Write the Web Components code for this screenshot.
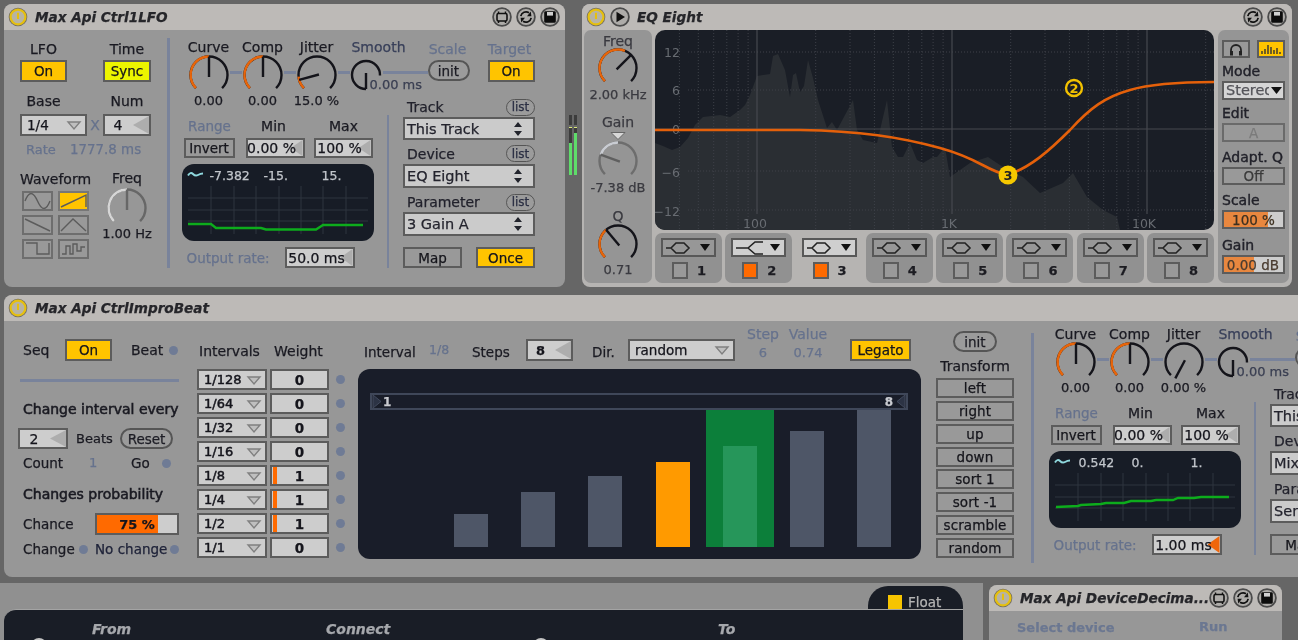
<!DOCTYPE html>
<html><head><meta charset="utf-8"><title>Max Api devices</title>
<style>
html,body{margin:0;padding:0;background:#fff;height:640px;overflow:hidden}
</style>
<script>
const BASE=`*{box-sizing:border-box}
.r{display:flex;align-items:center}.c{display:flex;flex-direction:column}
.l{display:block;white-space:nowrap;line-height:16px;height:16px}.m{text-align:center}
.b{color:#66728d}.s{font-size:14px;-webkit-text-stroke:.55px}.v{font-size:13px}
svg{display:block}`;
function def(name,render){customElements.define(name,class extends HTMLElement{
 connectedCallback(){if(this.shadowRoot)return;const a=n=>this.getAttribute(n);
  this.attachShadow({mode:'open'}).innerHTML='<style>'+BASE+'</style>'+render(a,this);}});}

/* ---------- small controls ---------- */
def('x-btn',()=>`<style>:host{display:flex;align-items:center;justify-content:center;border:2px solid #5c5c5c;background:#999;font-size:13.5px;white-space:nowrap;color:#16161c;height:21px}
:host([tone=on]){background:#ffc400}:host([tone=sync]){background:#ecf500}:host([tone=light]){background:#cbcbcb}:host([tone=dim]){color:#7b7b7b;border-color:#6a6a6a}:host([tone=soft]){color:#3a3a3a}
</style><slot></slot>`);
def('x-pill',()=>`<style>:host{display:flex;align-items:center;justify-content:center;border:2px solid #555;border-radius:11px;font-size:13.5px;color:#1d1d25;background:#9b9b9b;height:21px;white-space:nowrap}
:host([small]){border-width:1.5px;font-size:12px;height:17px;width:29px;color:#2c3044}</style><slot></slot>`);
def('x-led',()=>`<style>:host{display:block;width:9px;height:9px;border-radius:50%;background:#6f7b95;flex:none}</style>`);
def('x-num',(a)=>`<style>:host{display:block;position:relative;border:2px solid #5c5c5c;background:#cdcdcd;height:21px;font-size:14px;color:#15151c;overflow:hidden}
.t{position:absolute;left:0;right:var(--tr,14px);top:0;bottom:0;display:flex;align-items:center;justify-content:center;white-space:nowrap}
.a{position:absolute;right:0;top:0;bottom:0;width:var(--aw,14px);background:var(--ac,#adadad);clip-path:polygon(0 50%,100% 0,100% 100%)}</style>
<i class="a"></i><div class="t"><slot></slot></div>`);
def('x-drop',(a)=>`<style>:host{display:block;position:relative;border:2px solid #5c5c5c;background:#cdcdcd;height:21px;font-size:13.5px;color:#15151c;overflow:hidden}
.t{position:absolute;left:5px;top:0;bottom:0;display:flex;align-items:center;white-space:nowrap}
svg{position:absolute;right:3px;top:50%;margin-top:-6px}</style>
<div class="t"><slot></slot></div><svg width="16" height="12"><path d="M2 3H14L8 10Z" fill="#bfbfbf" stroke="#808080" stroke-width="1.4"/></svg>`);
def('x-spin',()=>`<style>:host{display:block;position:relative;border:2px solid #5c5c5c;background:#cbcbcb;font-size:14.5px;color:#24242e;overflow:hidden}
.t{position:absolute;left:2px;top:0;bottom:0;display:flex;align-items:center;white-space:nowrap}
svg{position:absolute;right:10px;top:50%;margin-top:-8px}</style>
<div class="t"><slot></slot></div><svg width="10" height="16"><path d="M5 1L9 6H1ZM5 15L1 10H9Z" fill="#22242c"/></svg>`);
def('x-slider',(a)=>`<style>:host{display:block;position:relative;border:2px solid #5c5c5c;background:#cdcdcd;height:22px;font-size:13.5px;color:#15151c;overflow:hidden}
.f{position:absolute;left:0;top:0;bottom:0;width:${a('pct')||0}%;background:${a('col')||'#ff6a00'}}
.t{position:absolute;inset:0;display:flex;align-items:center;justify-content:${a('just')||'center'};padding:0 ${a('pad')||0}px;white-space:nowrap}</style>
<i class="f"></i><div class="t"><slot></slot></div>`);
def('x-weight',(a)=>`<style>:host{display:block;position:relative;border:2px solid #5c5c5c;background:#cdcdcd;height:21px;font-size:13.5px;font-weight:700;color:#15151c}
i{position:absolute;left:1px;top:0;bottom:0;width:4px;background:#ff6a00;display:${a('on')!=null?'block':'none'}}
.t{height:100%;display:flex;align-items:center;justify-content:center}</style><i></i><div class="t"><slot></slot></div>`);

/* ---------- knob ---------- */
function pol(cx,cy,r,d){const t=d*Math.PI/180;return [(cx+r*Math.sin(t)).toFixed(2),(cy-r*Math.cos(t)).toFixed(2)];}
function arc(cx,cy,r,a,b){const s=pol(cx,cy,r,a),e=pol(cx,cy,r,b);return `M${s[0]} ${s[1]}A${r} ${r} 0 ${b-a>180?1:0} 1 ${e[0]} ${e[1]}`;}
def('x-knob',(a)=>{const w=+(a('w')||42),h=38,cx=w/2,cy=20,r=+(a('r')||18.5);
 const tr=(a('track')||'-135,135').split(',').map(Number),hi=a('hi')?a('hi').split(',').map(Number):null,n=+(a('needle')||0);
 const tc=a('tc')||'#14141a',hc=a('hc')||'#e8650a',nc=a('nc')||tc,p=pol(cx,cy,r,n),p0=pol(cx,cy,-2,n);
 return `<style>:host{display:block;width:${w}px;height:${h}px;flex:none}svg{overflow:visible}</style>
 <svg width="${w}" height="${h}" fill="none" stroke-width="2.4">
 <path d="${arc(cx,cy,r,tr[0],tr[1])}" stroke="${tc}"/>${hi?`<path d="${arc(cx,cy,r,hi[0],hi[1])}" stroke="${hc}"/>`:''}
 <line x1="${p0[0]}" y1="${p0[1]}" x2="${p[0]}" y2="${p[1]}" stroke="${nc}"/></svg>`;});

/* ---------- device frame ---------- */
const HB={
 hot:'<rect x="5" y="6.5" width="10" height="7.5" rx="1.5" fill="none" stroke="#111" stroke-width="1.6"/><path d="M6.5 4.5v2M13.5 4.5v2M6.5 14v2M13.5 14v2" stroke="#111" stroke-width="1.5"/>',
 cycle:'<path d="M4.8 9.2A5.3 5.3 0 0 1 13 5.8M15.2 10.8A5.3 5.3 0 0 1 7 14.2" fill="none" stroke="#111" stroke-width="1.7"/><path d="M11 9.2L14.8 4.6L15.4 9.2ZM9 10.8L5.2 15.4L4.6 10.8Z" fill="#111"/>',
 save:'<path d="M4.2 5.6A1.4 1.4 0 0 1 5.6 4.2H14.4A1.4 1.4 0 0 1 15.8 5.6V14.4A1.4 1.4 0 0 1 14.4 15.8H5.6A1.4 1.4 0 0 1 4.2 14.4Z" fill="#0c0c0c"/><rect x="7" y="5" width="6" height="3.6" fill="#d0d0d0"/>',
 play:'<path d="M6.5 4.8L15 10L6.5 15.2Z" fill="#111"/>'};
def('x-hbtn',(a)=>`<style>:host{display:block;width:20px;height:20px;flex:none}</style><svg width="20" height="20"><circle cx="10" cy="10" r="8.9" fill="#aeaca9" stroke="#4b4b4b" stroke-width="1.8"/>${HB[a('i')]}</svg>`);
def('x-power',()=>`<style>:host{display:block;width:20px;height:20px;flex:none}</style><svg width="20" height="20"><circle cx="10" cy="10" r="9.3" fill="#757064"/><circle cx="10" cy="10" r="7.4" fill="#b7b3a3" stroke="#e6c00e" stroke-width="2.2"/><rect x="9" y="5.8" width="2" height="6.2" fill="#e6c00e"/></svg>`);
def('x-device',(a)=>{const bs=(a('btns')||'').split(',').filter(Boolean).map(b=>`<x-hbtn i="${b}"></x-hbtn>`).join('');
 return `<style>:host{display:block;border-radius:8px;overflow:hidden;background:var(--b,#979797);flex:none}
 .h{height:26px;background:#bdbab7;display:flex;align-items:center;padding:0 5px 0 4px}
 .t{font:italic 700 13.6px "DejaVu Sans",sans-serif;color:#26262a;margin-left:7px;white-space:nowrap;flex:1;min-width:0}
 .g{display:flex;gap:4px}.p{margin-left:4px}</style>
 <div class="h"><x-power></x-power>${a('play')!=null?'<x-hbtn class="p" i="play"></x-hbtn>':''}<span class="t">${a('name')}</span><div class="g">${bs}</div></div><slot></slot>`;});

/* ---------- oscilloscope ---------- */
def('x-scope',(a)=>{const vs=[29,52,74,97,119,141,164].map(x=>`<line x1="${x}" y1="22" x2="${x}" y2="70"/>`).join('');
 const hs=[34,46,57].map(y=>`<line x1="6" y1="${y}" x2="186" y2="${y}"/>`).join('');
 const xs=(a('xs')||'').split(',');
 return `<style>:host{display:block;position:relative;width:192px;height:77px;background:#171c26;border-radius:12px;overflow:hidden;flex:none}
 svg{position:absolute;inset:0}
 .row{position:relative;height:20px;color:#c2c6cc;font-size:12.5px;line-height:21px;white-space:nowrap}
 .row span{position:absolute;top:1px}</style>
 <svg width="192" height="77"><g stroke="#2f343f" stroke-width="1">${vs}${hs}</g>
 <path d="M6 11.5q2.5-4 5 -1.5t5 1t5-1.5" fill="none" stroke="#8fd8de" stroke-width="2"/>
 <polyline points="${a('pts')}" fill="none" stroke="#0dac1c" stroke-width="2.4"/></svg>
 <div class="row"><span style="left:${xs[0]}px">${a('a')}</span><span style="left:${xs[1]}px">${a('b')}</span><span style="left:${xs[2]}px">${a('c')}</span></div>`;});

/* ---------- the repeated modulation section ---------- */
def('x-mod',(a)=>{const box=(lab,pill,val,h)=>`<div class="hd" style="height:${pill}px"><span class="l" style="padding-left:4px;color:#22222c">${lab}</span><x-pill small>list</x-pill></div><x-spin style="height:${h}px;width:132px">${val}</x-spin>`;
 return `<style>:host{display:block;width:397px;height:240px;flex:none;color:#1a1a22}
 .lab{display:grid;grid-template-columns:54px 54px 54px 70px 68px 56px;grid-template-rows:16px;padding-left:12px}
 .kn{display:flex;height:38px;padding-left:18px;align-items:flex-start}
 .d{display:block;width:12px;height:2.5px;background:#79839b;margin-top:16px;flex:none}
 .sm{position:relative;width:30px;margin-left:1px;flex:none}
 .sm span{position:absolute;left:19px;top:22px;font-size:13px;line-height:16px;white-space:nowrap;color:#3a3f52}
 .low{display:flex}.left{width:217px;padding-left:12px;flex:none}
 .vals{display:grid;grid-template-columns:54px 54px 54px}
 .rng{display:grid;grid-template-columns:56px 72px 68px;margin-top:9px}
 .ctl{display:flex;margin-top:4px}
 .sc{margin-top:6px}
 .out{display:flex;align-items:center;margin-top:6px;height:21px}
 .div{width:2.5px;height:153px;margin-top:22px;background:#79839b;flex:none}
 .right{padding:4px 0 0 14px;width:150px;flex:none}
 .hd{display:flex;justify-content:space-between;align-items:center;width:132px}
 .x{display:flex;justify-content:space-between;margin-top:11px;width:132px}
 </style>
 <div class="lab"><span class="l m">Curve</span><span class="l m">Comp</span><span class="l m">Jitter</span><span class="l m" style="color:#39405a">Smooth</span><span class="l m b" style="margin-top:2px">Scale</span><span class="l m b" style="margin-top:2px">Target</span></div>
 <div class="kn">
  <x-knob hi="-135,0" needle="0"></x-knob><i class="d"></i>
  <x-knob hi="-135,0" needle="0"></x-knob><i class="d"></i>
  <x-knob hi="${a('jhi')}" needle="${a('jn')}"></x-knob><i class="d"></i>
  <div class="sm"><x-knob w="30" r="14" track="-180,92" needle="180"></x-knob><span>0.00 ms</span></div>
  <i class="d" style="width:45px;margin-left:2px"></i>
  <x-pill style="width:42px;margin-top:5px">init</x-pill>
  <x-btn tone="on" style="width:47px;height:22px;margin:5px 0 0 18px">On</x-btn>
 </div>
 <div class="low"><div class="left">
  <div class="vals"><span class="l m v">0.00</span><span class="l m v">0.00</span><span class="l m v">${a('jv')}</span></div>
  <div class="rng"><span class="l m b" style="font-size:13.5px">Range</span><span class="l m">Min</span><span class="l m">Max</span></div>
  <div class="ctl"><x-btn style="width:51px;height:20px;margin-left:2px">Invert</x-btn><x-num style="width:59px;height:20px;margin-left:11px;--tr:7px;--aw:12px">0.00 %</x-num><x-num style="width:59px;height:20px;margin-left:9px;--tr:7px;--aw:12px">100 %</x-num></div>
  <x-scope class="sc" a="${a('sa')}" b="${a('sb')}" c="${a('sc')}" xs="${a('sx')}" pts="${a('pts')}"></x-scope>
  <div class="out"><span class="l b" style="width:103px;padding-left:5px;font-size:13.5px">Output rate:</span><x-num style="width:70px;${a('oc')?'--ac:'+a('oc')+';--aw:12px;--tr:6px':'--tr:6px;--aw:12px'}">${a('out')}</x-num></div>
 </div><i class="div"></i>
 <div class="right">
  ${box('Track',20,a('t1'),23)}<div style="height:3px"></div>
  ${box('Device',21,a('t2'),24)}<div style="height:4px"></div>
  ${box('Parameter',20,a('t3'),24)}
  <div class="x"><x-btn style="width:59px">Map</x-btn><x-btn tone="on" style="width:59px">Once</x-btn></div>
 </div></div>`;});

/* ---------- LFO device body ---------- */
def('x-wave',(a)=>{const P={sine:'M1 8C5 -2 9 -2 13.5 8S22 18 26 8',up:'M1 14L26 2V14',down:'M1 2L26 14',tri:'M1 14L13 2L26 14',sq:'M2 2H13V13H25V2',rnd:'M2 13H6V5H10V13H13V3H17V10H21V6H25'};
 return `<style>:host{display:block;width:31px;height:20px;border:2px solid #6e6e6e;background:#999}:host([on]){background:#ffc400;border-color:#777}</style>
 <svg width="27" height="16"><path d="${P[a('k')]}" fill="none" stroke="#5c5c5c" stroke-width="1.4"/></svg>`;});
def('x-lfo',()=>`<style>:host{display:flex;height:257px;padding-top:9px;color:#1a1a22}
 .a{width:163px;padding-left:16px;flex:none}
 .two{display:grid;grid-template-columns:83px 48px}
 .wv{display:grid;grid-template-columns:31px 31px;gap:4px 5px;margin:4px 0 0 2px}
 .dv{width:2.5px;height:230px;background:#79839b;flex:none;margin-top:-1px}
</style><div class="a">
 <div class="two" style="margin-top:2px"><span class="l m" style="width:47px">LFO</span><span class="l m">Time</span></div>
 <div class="two" style="margin-top:3px"><x-btn tone="on" style="width:47px;height:22px">On</x-btn><x-btn tone="sync" style="height:22px">Sync</x-btn></div>
 <div class="two" style="margin-top:11px"><span class="l m" style="width:47px">Base</span><span class="l m">Num</span></div>
 <div class="r" style="margin-top:5px"><x-drop style="width:67px;height:22px">1/4</x-drop><span class="l m b" style="width:16px">X</span><x-num style="width:48px;height:22px;--tr:18px;--aw:16px">4</x-num></div>
 <div class="r" style="margin-top:6px;padding-left:6px"><span class="l b v" style="width:44px">Rate</span><span class="l b" style="font-size:13.4px">1777.8 ms</span></div>
 <div class="r" style="margin-top:12px;align-items:flex-start">
  <div style="width:83px"><span class="l" style="margin-top:1px">Waveform</span>
   <div class="wv"><x-wave k="sine"></x-wave><x-wave k="up" on></x-wave><x-wave k="down"></x-wave><x-wave k="tri"></x-wave><x-wave k="sq"></x-wave><x-wave k="rnd"></x-wave></div></div>
  <div style="width:48px"><span class="l m">Freq</span><x-knob style="margin:2px auto 0" hi="-135,0" hc="#d6d6d6" tc="#676767" needle="0"></x-knob><span class="l m v" style="margin-left:-6px;margin-right:-6px">1.00 Hz</span></div>
 </div></div><i class="dv"></i>
 <x-mod jhi="-135,-95" jn="-105" jv="15.0 %" sa="-7.382" sb="-15." sc="15." sx="28,82,140"
  pts="6,60 29,60 34,64 79,64 84,65.5 134,65.5 141,61 181,61" out="50.0 ms"
  t1="This Track" t2="EQ Eight" t3="3 Gain A"></x-mod>`);

/* ---------- level meter ---------- */
def('x-meter',()=>`<style>:host{display:flex;gap:2px;width:8px;height:60px;margin:111px 0 0 4px;flex:none}
 i{display:block;width:3px;height:60px}</style>
 <i style="background:linear-gradient(#3c3c3c 0 10px,transparent 10px 12px,#d9e87a 12px 13px,#3c3c3c 13px 28px,#5fdc6a 28px)"></i>
 <i style="background:linear-gradient(#3c3c3c 0 10px,transparent 10px 12px,#d9e87a 12px 13px,#3c3c3c 13px 18px,#5fdc6a 18px)"></i>`);

/* ---------- EQ ---------- */
def('x-eqgraph',()=>{const L=Math.log10,dec=[757,952,1147];let dot='';
 for(const base of [10,100,1000,10000])for(let m=2;m<=9;m++){const f=base*m,x=757+195*(L(f)-2);if(x>656&&x<1213)dot+=`<line x1="${x.toFixed(1)}" y1="30" x2="${x.toFixed(1)}" y2="230"/>`;}
 const hz=[52,90,171,210].map(y=>`<line x1="688" y1="${y}" x2="1214" y2="${y}"/>`).join('');
 const spec='655,143 663,146 672,150 680,147 688,138 695,125 703,117 720,115 730,117 740,110 745,105 750,95 757,76 770,74 773,56 778,54 785,70 790,97 793,75 796,73 800,92 804,86 808,60 813,78 818,100 827,128 832,122 837,130 853,100 857,130 863,140 877,143 887,100 892,147 898,157 903,157 910,143 917,160 923,163 933,157 937,157 945,147 950,177 970,163 988,157 1003,167 1023,177 1040,193 1063,183 1073,173 1087,197 1103,210 1117,217 1120,230 655,230';
 const tx=(x,y,t,anc)=>`<text x="${x}" y="${y}" text-anchor="${anc||'end'}">${t}</text>`;
 return `<style>:host{display:block;width:559px;height:200px;border-radius:10px;overflow:hidden;background:#1a1e26}text{-webkit-text-stroke:0}</style>
 <svg viewBox="655 30 559 200" width="559" height="200">
 <polygon points="${spec}" fill="#2a2e33"/>
 <g stroke="#3e4149" stroke-width="1" stroke-dasharray="1 2">${dot}${hz}</g>
 <g stroke="#46494f" stroke-width="1.2"><line x1="655" y1="129" x2="1214" y2="129"/>${dec.map(x=>`<line x1="${x}" y1="30" x2="${x}" y2="214"/>`).join('')}</g>
 <g fill="#686c72" font-family="DejaVu Sans" font-size="12.5">${tx(680,57,'12')}${tx(680,95,'6')}${tx(680,134,'0')}${tx(680,177,'−6')}${tx(680,216,'−12')}${tx(755,228,'100','middle')}${tx(949,228,'1K','middle')}${tx(1144,228,'10K','middle')}</g>
 <path d="M655 130L800 130C860 131 900 137 940 148S985 170 1007 175C1030 168 1050 150 1070 130C1090 108 1105 97 1130 90C1150 84 1180 82 1215 82" fill="none" stroke="#e4600a" stroke-width="2.6"/>
 <circle cx="1074" cy="88" r="8" fill="#1a1e26" stroke="#f2c100" stroke-width="2.4"/><text x="1074" y="93" text-anchor="middle" fill="#f2c100" font-family="DejaVu Sans" font-weight="700" font-size="13">2</text>
 <circle cx="1008" cy="175" r="9.5" fill="#f5c800"/><text x="1008" y="180" text-anchor="middle" fill="#222" font-family="DejaVu Sans" font-weight="700" font-size="13">3</text>
 </svg>`;});
def('x-band',(a)=>{const sel=a('sel')!=null,lit=a('lit')!=null,on=a('on')!=null;
 const shape=a('shape')=='hi'?'M2 9H14L21 3H29M14 9L21 15H29':'M2 9H7L12 4H20L25 9L20 14H12L7 9';
 return `<style>:host{display:block;width:67px;height:50px;border-radius:7px;background:${sel?'transparent':'#919191'};padding:5px 6px 0;color:#1c1c22;font:700 13px "DejaVu Sans",sans-serif;flex:none}
 .d{height:19px;border:2px solid #585858;background:${lit?'#cfcfcf':'#979797'};display:flex;justify-content:space-between;align-items:center;padding:0 4px 0 1px}
 .f{display:flex;align-items:center;margin:5px 0 0 11px}
 .k{width:16px;height:17px;border:2px solid #5c5c5c;background:${on?'#ff6a00':'#999'};margin-right:9px}</style>
 <div class="d"><svg width="32" height="18"><path d="${shape}" fill="none" stroke="#222" stroke-width="1.6"/></svg><svg width="10" height="8"><path d="M0 0H10L5 7Z" fill="#111"/></svg></div>
 <div class="f"><i class="k"></i><slot></slot></div>`;});
def('x-eq',()=>`<style>:host{display:flex;padding:0 3px 4px 2px;gap:3px;height:257px;color:#20202a}
 .p{width:68px;height:253px;background:#959595;border-radius:7px;flex:none;padding-top:3px;display:flex;flex-direction:column;align-items:center;color:#3a3a40}
 .mid{width:559px;flex:none}.bands{display:flex;justify-content:space-between;margin-top:3px}
 .q{width:71px;height:253px;background:#959595;border-radius:7px;margin-left:1px;flex:none;padding:10px 4px 0;color:#22222a}
 .q .s{-webkit-text-stroke:.4px}
 .tri{margin-top:2px}
 .st{position:relative;height:19px;border:2px solid #5c5c5c;background:#d6d6d6;color:#55555a;overflow:hidden;font-size:14.5px;line-height:15px;padding-left:2px;white-space:nowrap}
 .st svg{position:absolute;right:0;top:0;background:#d6d6d6}
 </style>
 <div class="p"><span class="l">Freq</span><x-knob hi="-135,22" needle="45" style="margin-top:-1px"></x-knob><span class="l v" style="margin-top:1px;white-space:nowrap">2.00 kHz</span>
  <span class="l" style="margin-top:11px">Gain</span><svg class="tri" width="16" height="8"><path d="M1 0.5H15L8 7.5Z" fill="#d8d8d8" stroke="#666" stroke-width="1"/></svg>
  <x-knob track="-135,135" hi="-70,0" hc="#c9ccd2" tc="#6d6d6d" nc="#5f5f5f" needle="-70" style="margin-top:1px"></x-knob><span class="l v" style="margin-top:1px;white-space:nowrap">-7.38 dB</span>
  <span class="l" style="margin-top:12px">Q</span><x-knob hi="-135,-40" needle="-40"></x-knob><span class="l v">0.71</span></div>
 <div class="mid"><x-eqgraph></x-eqgraph><div class="bands">
  <x-band>1</x-band><x-band shape="hi" lit on>2</x-band><x-band sel lit on>3</x-band><x-band>4</x-band><x-band>5</x-band><x-band>6</x-band><x-band>7</x-band><x-band>8</x-band></div></div>
 <div class="q">
  <div class="r" style="justify-content:space-between"><x-btn style="width:28px;height:18px"><svg width="14" height="13"><path d="M2 9V7A5 5 0 0 1 12 7V9" fill="none" stroke="#222" stroke-width="1.8"/><rect x="1" y="8" width="3" height="4.5" fill="#222"/><rect x="10" y="8" width="3" height="4.5" fill="#222"/></svg></x-btn>
  <x-btn tone="on" style="width:28px;height:18px"><svg width="22" height="12"><path d="M2 11V8M5 11V6M8 11V2M11 11V4M14 11V7M17 11V5M20 11V9" stroke="#333" stroke-width="1.4"/></svg></x-btn></div>
  <span class="l s" style="margin-top:5px">Mode</span>
  <div class="st" style="margin-top:2px">Stereo<svg width="14" height="15"><path d="M2 4H13L7.5 11Z" fill="#111"/></svg></div>
  <span class="l s" style="margin-top:5px">Edit</span>
  <x-btn tone="dim" style="height:19px;margin-top:2px">A</x-btn>
  <span class="l s" style="margin-top:7px;white-space:nowrap">Adapt. Q</span>
  <x-btn tone="soft" style="height:18px;margin-top:2px">Off</x-btn>
  <span class="l s" style="margin-top:7px">Scale</span>
  <x-slider pct="74" col="#e8873f" style="height:19px;margin-top:2px;color:#3d3020">100 %</x-slider>
  <span class="l s" style="margin-top:8px">Gain</span>
  <x-slider pct="50" col="#e8873f" just="flex-end" pad="4" style="height:19px;margin-top:2px;color:#4a3c30">0.00 dB</x-slider>
 </div>`);

/* ---------- step sequencer ---------- */
def('x-seq',()=>{const H=[0,33,55,71,85,137,116,137];
 const bars=H.map((h,i)=>{const c=i==4?'#ff9a00':'#4e5667';
  return `<div class="col" ${i==5?'style="background:#0c7f3a"':''}><i style="height:${i==5?101:h}px;background:${i==5?'#26965a':c}"></i></div>`;}).join('');
 return `<style>:host{display:block;width:563px;height:190px;background:#191d29;border-radius:12px;padding:24px 12px 12px;flex:none}
 .rg{position:relative;height:17px;border:2px solid #3f4759;display:flex;justify-content:space-between;align-items:center;color:#c9cbd0;font:700 12px "DejaVu Sans",sans-serif;padding:0 13px 0 11px;width:538px}
 .rg svg{position:absolute;top:0}
 .g{display:grid;grid-template-columns:repeat(8,1fr);height:137px;width:538px}
 .col{display:flex;align-items:flex-end;justify-content:center}i{display:block;width:34px}</style>
 <div class="rg"><svg style="left:0" width="10" height="13"><path d="M1 0L9 6.5L1 13Z" fill="#2c3344" stroke="#424a5d"/></svg><span>1</span><span>8</span><svg style="right:0" width="10" height="13"><path d="M9 0L1 6.5L9 13Z" fill="#2c3344" stroke="#424a5d"/></svg></div>
 <div class="g">${bars}</div>`;});
def('x-improbeat',()=>{const R=[['1/128',0],['1/64',0],['1/32',0],['1/16',0],['1/8',1],['1/4',1],['1/2',1],['1/1',0]];
 const rows=R.map(([t,w])=>`<div class="r" style="gap:3px"><x-drop style="width:70px;font-size:13px;-webkit-text-stroke:.5px">${t}</x-drop><x-weight style="width:59px" ${w?'on':''}>${w}</x-weight><x-led style="margin-left:4px"></x-led></div>`).join('');
 const tr=['left','right','up','down','sort 1','sort -1','scramble','random'].map(t=>`<x-btn style="height:20px;font-size:13.5px;letter-spacing:.1px">${t}</x-btn>`).join('');
 return `<style>:host{display:flex;height:256px;color:#1a1a22}
 .a{width:193px;padding:18px 0 0 14px;flex:none}.t{padding-left:5px}
 .iv{width:161px;padding-top:22px;flex:none}
 .sq{width:563px;padding-top:5px;flex:none}
 .top{display:flex;align-items:flex-end;height:35px;margin-bottom:8px}
 .tf{width:78px;margin-left:15px;padding-top:10px;flex:none}
 .bt{display:flex;flex-direction:column;gap:2.85px;margin-top:4px}
 .dv{width:2.5px;height:230px;background:#79839b;margin:12px 0 0 17px;flex:none}
 .mw{margin:5px 0 0 3px}
 </style>
 <div class="a">
  <div class="r" style="height:22px"><span class="l t" style="width:47px">Seq</span><x-btn tone="on" style="width:47px;height:22px">On</x-btn><span class="l" style="margin-left:19px;width:38px">Beat</span><x-led></x-led></div>
  <div style="height:3px;width:159px;margin:18px 0 0 2px;background:#79839b"></div>
  <span class="l t s" style="margin-top:19px">Change interval every</span>
  <div class="r" style="margin-top:11px;height:21px"><x-num style="width:50px;--tr:18px;--aw:16px">2</x-num><span class="l" style="width:52px;padding-left:8px;font-size:13px">Beats</span><x-pill style="width:53px">Reset</x-pill></div>
  <div class="r t" style="margin-top:6px;height:16px"><span class="l" style="width:66px;font-size:13.5px">Count</span><span class="l b v" style="width:42px">1</span><span class="l" style="width:31px;font-size:13.5px">Go</span><x-led></x-led></div>
  <span class="l t s" style="margin-top:15px">Changes probability</span>
  <div class="r" style="margin-top:11px;height:22px"><span class="l t" style="width:77px;font-size:13.5px">Chance</span><x-slider pct="76" style="width:84px;font-weight:700;font-size:13px;padding-right:4px">75 %</x-slider></div>
  <div class="r t" style="margin-top:6px;height:16px;font-size:13.5px"><span class="l" style="width:56px">Change</span><x-led></x-led><span class="l" style="width:75px;margin-left:7px;color:#20243a">No change</span><x-led></x-led></div>
 </div>
 <div class="iv"><div class="r"><span class="l" style="width:77px;padding-left:2px">Intervals</span><span class="l">Weight</span></div>
  <div class="c" style="gap:3px;margin-top:10px">${rows}</div></div>
 <div class="sq"><div class="top" style="padding-left:6px">
   <span class="l" style="width:65px;margin-bottom:1px;font-size:13.5px">Interval</span><span class="l b" style="width:43px;margin-bottom:3px;font-size:12.5px">1/8</span><span class="l" style="width:54px;margin-bottom:1px;font-size:13.5px">Steps</span>
   <x-num style="width:47px;height:22px;--tr:18px;--aw:16px;font-weight:700;font-size:13px">8</x-num><span class="l" style="margin:0 0 1px 19px;width:36px;font-size:13.5px">Dir.</span>
   <x-drop style="width:107px;height:22px;font-size:13.5px">random</x-drop>
   <div class="c" style="width:40px;margin-left:8px"><span class="l m b">Step</span><span class="l m b v" style="margin-top:3px">6</span></div>
   <div class="c" style="width:48px;margin-left:1px"><span class="l m b">Value</span><span class="l m b v" style="margin-top:3px">0.74</span></div>
   <x-btn tone="on" style="width:61px;height:22px;margin-left:18px">Legato</x-btn></div>
  <x-seq></x-seq></div>
 <div class="tf"><x-pill style="width:44px;margin:0 auto">init</x-pill><span class="l m" style="margin-top:6px">Transform</span><div class="bt">${tr}</div></div>
 <i class="dv"></i>
 <x-mod class="mw" jhi="-135,-135.1" jn="-152" jv="0.00 %" sa="0.542" sb="0." sc="1." sx="30,83,142"
  pts="7,56 29,55 32,54 52,53 57,52 75,52 82,50 102,50 107,49 124,49 129,47 145,47 152,46 180,46" out="1.00 ms" oc="#f0660a"
  t1="This Track" t2="Mixer" t3="Send A"></x-mod>`;});

/* ---------- bottom strip ---------- */
def('x-router',()=>`<style>:host{display:block;position:relative;width:983px;height:57px;background:#909090;flex:none;padding:3px 0 0 4px;overflow:hidden}
 .tab{width:95px;height:23px;margin-left:864px;background:#191d26;border-radius:20px 20px 0 0;display:flex;align-items:center;padding:8px 0 0 20px;color:#b4b4b4;font-size:13.5px}
 .tab i{display:block;width:14px;height:14px;background:#f7c400;margin-right:6px;flex:none}
 .p{width:959px;height:40px;background:#191d26;border-radius:12px 0 0 0;padding:11px 0 0 88px;display:flex;font:italic 700 14px "DejaVu Sans",sans-serif;color:#a6a8ac;position:relative;border-top:1px solid #a4a4a4}
 .p span{display:block;line-height:16px;white-space:nowrap}
 u{position:absolute;top:28px;width:16px;height:16px;border-radius:50%;background:#c4c4c4}</style>
 <div class="tab"><i></i>Float</div>
 <div class="p"><span style="width:234px">From</span><span style="width:392px">Connect</span><span>To</span><u style="left:27px"></u><u style="left:529px"></u></div>`);

/* ---------- page ---------- */
def('x-app',()=>`<style>:host{display:block;width:1298px;height:640px;background:#666;overflow:hidden;padding-top:4px;filter:blur(.4px);font:14px "DejaVu Sans",sans-serif;-webkit-text-stroke:.25px;position:relative}
 .row{display:flex}.tail{display:flex;margin-top:6px;height:57px}</style>
 <div class="row" style="padding-left:4px;height:283px"><x-device name="Max Api Ctrl1LFO" btns="hot,cycle,save" style="width:561px;height:283px"><x-lfo></x-lfo></x-device><x-meter></x-meter>
  <x-device name="EQ Eight" play btns="cycle,save" style="width:710px;height:283px;--b:#b6b4b2;margin-left:5px"><x-eq></x-eq></x-device></div>
 <div style="margin:8px 0 0 4px;height:282px;overflow:hidden"><x-device name="Max Api CtrlImproBeat" style="width:1294px;height:282px;border-radius:8px 0 0 8px"><x-improbeat></x-improbeat></x-device></div>
 <div class="tail"><x-router></x-router>
  <x-device name="Max Api DeviceDecima..." btns="hot,cycle,save" style="width:293px;height:55px;margin:2px 0 0 6px;border-radius:8px 8px 0 0">
   <div style="display:flex;padding:8px 0 0 28px;font-size:13px;font-weight:700;color:#6b7791;white-space:nowrap"><span style="width:182px;padding-top:1px">Select device</span><span>Run</span></div></x-device></div>`);
</script></head>
<body><x-app></x-app></body></html>
